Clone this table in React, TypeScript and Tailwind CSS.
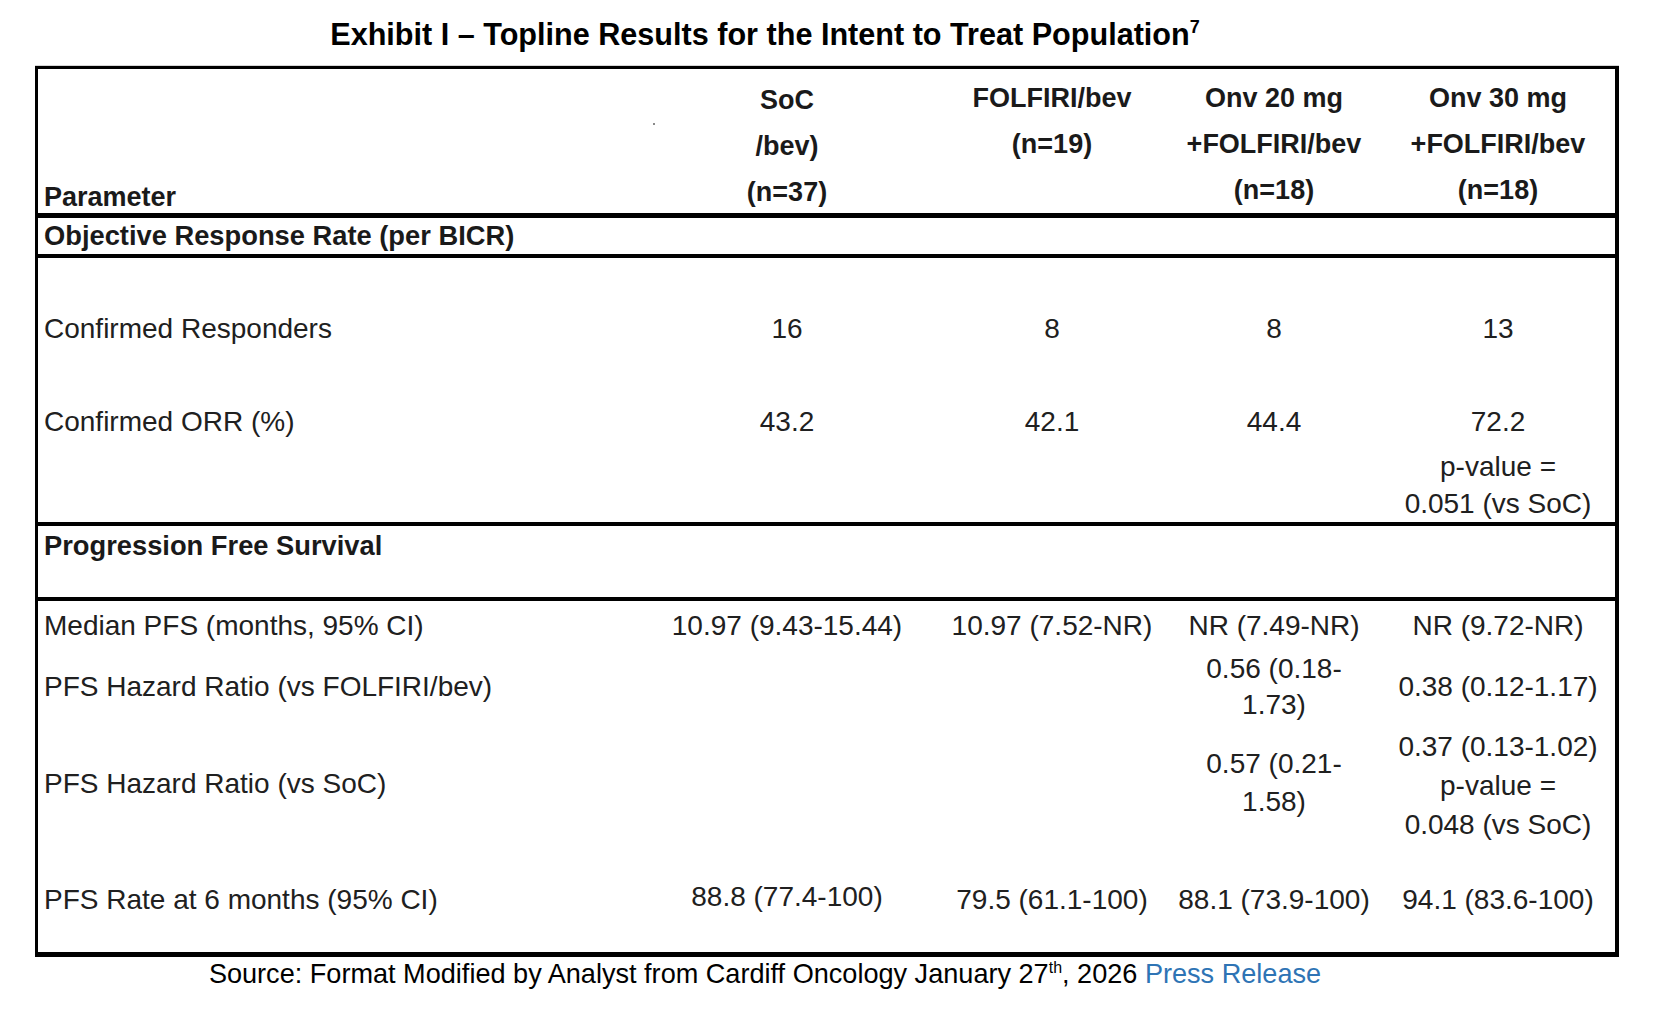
import React from "react";

const cols = "grid grid-cols-[599px_300px_230px_214px_234px]";

export default function App() {
  return (
    <div className="relative h-[1012px] w-[1654px] overflow-hidden bg-white font-['Liberation_Sans',Arial,sans-serif] text-[#202020]">
      {/* title */}
      <div className="w-[1530px] pt-[19px] text-center text-[30.6px] font-bold leading-[30px] text-black">
        Exhibit I – Topline Results for the Intent to Treat Population
        <sup className="top-[-12px] text-[18px]">7</sup>
      </div>

      {/* table */}
      <div className="ml-[35px] mt-[16px] w-[1584px] border-t border-[#d6d6d6]">
        <div className="border-b-[5px] border-l-[3px] border-r-[4px] border-t-[3px] border-black">
          {/* header */}
          <div className={`${cols} h-[144px] text-[27px] font-bold text-[#1a1a1a]`}>
            <div className="flex items-end pl-[6px] leading-[36px]">Parameter</div>
            <div className="relative pt-[8px] text-center leading-[46px]">
              <span className="absolute left-[16px] top-[54px] h-[2px] w-[2px] bg-[#8a8a8a]" />
              <div>SoC</div>
              <div>/bev)</div>
              <div>(n=37)</div>
            </div>
            <div className="pt-[6px] text-center leading-[46px]">
              <div>FOLFIRI/bev</div>
              <div>(n=19)</div>
            </div>
            <div className="pt-[6px] text-center leading-[46px]">
              <div>Onv 20 mg</div>
              <div>+FOLFIRI/bev</div>
              <div>(n=18)</div>
            </div>
            <div className="pt-[6px] text-center leading-[46px]">
              <div>Onv 30 mg</div>
              <div>+FOLFIRI/bev</div>
              <div>(n=18)</div>
            </div>
          </div>

          <div className="h-[5px] bg-black" />

          <div className="h-[36px] pl-[6px] text-[27.3px] font-bold leading-[36px] text-[#1a1a1a]">
            Objective Response Rate (per BICR)
          </div>

          <div className="h-[4px] bg-black" />

          {/* ORR body */}
          <div className="text-[28px] whitespace-nowrap">
            <div className={`${cols} h-[145px] pt-[52px] leading-[38px]`}>
              <div className="pl-[6px]">Confirmed Responders</div>
              <div className="text-center">16</div>
              <div className="text-center">8</div>
              <div className="text-center">8</div>
              <div className="text-center">13</div>
            </div>
            <div className={`${cols} h-[119px] leading-[38px]`}>
              <div className="pl-[6px]">Confirmed ORR (%)</div>
              <div className="text-center">43.2</div>
              <div className="text-center">42.1</div>
              <div className="text-center">44.4</div>
              <div className="text-center">
                <div>72.2</div>
                <div className="mt-[7px] leading-[37px]">p-value =</div>
                <div className="leading-[37px]">0.051 (vs SoC)</div>
              </div>
            </div>
          </div>

          <div className="h-[4px] bg-black" />

          <div className="h-[71px] pl-[6px] pt-[2px] text-[27.3px] font-bold leading-[36px] text-[#1a1a1a]">
            Progression Free Survival
          </div>

          <div className="h-[4px] bg-black" />

          {/* PFS body */}
          <div className="text-[28px] whitespace-nowrap">
            <div className={`${cols} h-[48px] pt-[6px] leading-[38px]`}>
              <div className="pl-[6px]">Median PFS (months, 95% CI)</div>
              <div className="text-center">10.97 (9.43-15.44)</div>
              <div className="text-center">10.97 (7.52-NR)</div>
              <div className="text-center">NR (7.49-NR)</div>
              <div className="text-center">NR (9.72-NR)</div>
            </div>
            <div className={`${cols} h-[76px]`}>
              <div className="flex items-center pl-[6px] leading-[38px]">PFS Hazard Ratio (vs FOLFIRI/bev)</div>
              <div />
              <div />
              <div className="flex flex-col justify-center text-center leading-[36px]">
                <div>0.56 (0.18-</div>
                <div>1.73)</div>
              </div>
              <div className="flex flex-col justify-center text-center leading-[38px]">
                <div>0.38 (0.12-1.17)</div>
              </div>
            </div>
            <div className={`${cols} h-[114px]`}>
              <div className="flex items-center pb-[2px] pl-[6px] leading-[38px]">PFS Hazard Ratio (vs SoC)</div>
              <div />
              <div />
              <div className="flex flex-col justify-center pb-[3px] text-center leading-[38px]">
                <div>0.57 (0.21-</div>
                <div>1.58)</div>
              </div>
              <div className="pt-[2px] text-center leading-[39px]">
                <div>0.37 (0.13-1.02)</div>
                <div>p-value =</div>
                <div>0.048 (vs SoC)</div>
              </div>
            </div>
            <div className={`${cols} h-[113px] pt-[42px] leading-[38px]`}>
              <div className="pl-[6px]">PFS Rate at 6 months (95% CI)</div>
              <div className="-mt-[3px] text-center">88.8 (77.4-100)</div>
              <div className="text-center">79.5 (61.1-100)</div>
              <div className="text-center">88.1 (73.9-100)</div>
              <div className="text-center">94.1 (83.6-100)</div>
            </div>
          </div>
        </div>
      </div>

      {/* source */}
      <div className="mt-[2px] w-[1530px] text-center text-[27.1px] leading-[30px] text-black">
        Source: Format Modified by Analyst from Cardiff Oncology January 27
        <sup className="top-[-10px] text-[16px]">th</sup>, 2026{" "}
        <span className="text-[#2e74b5]">Press Release</span>
      </div>
    </div>
  );
}
